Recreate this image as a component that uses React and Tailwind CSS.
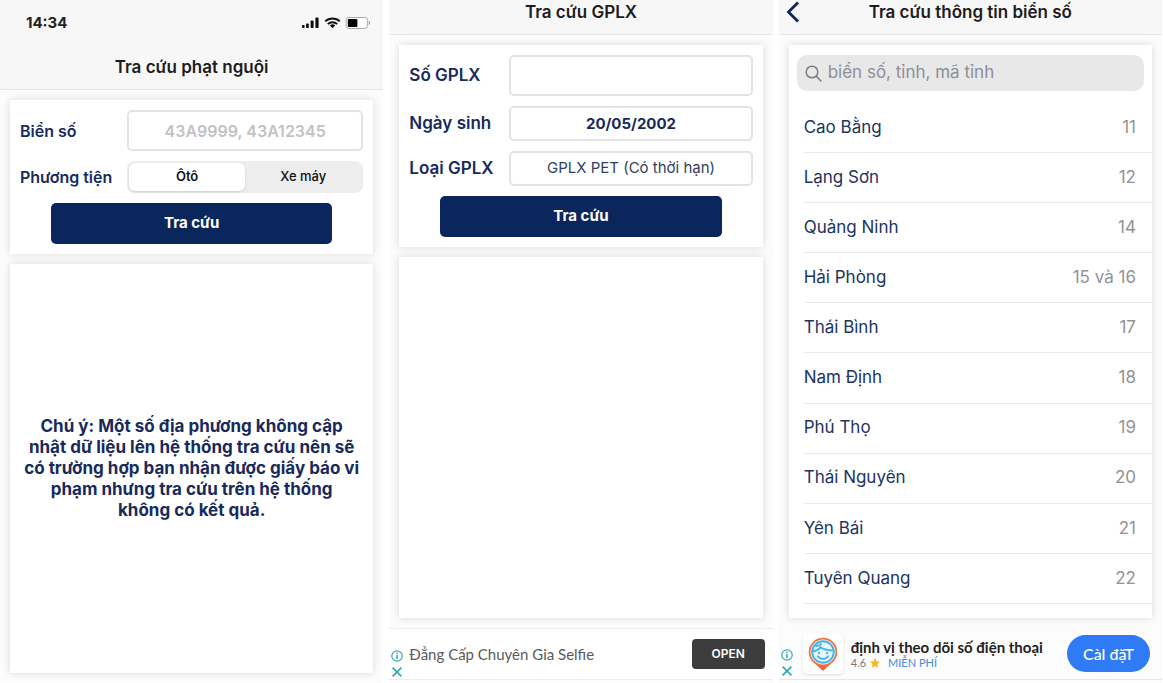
import { useState } from "react";

const provinces = [
  { name: "Cao Bằng", code: "11" },
  { name: "Lạng Sơn", code: "12" },
  { name: "Quảng Ninh", code: "14" },
  { name: "Hải Phòng", code: "15 và 16" },
  { name: "Thái Bình", code: "17" },
  { name: "Nam Định", code: "18" },
  { name: "Phú Thọ", code: "19" },
  { name: "Thái Nguyên", code: "20" },
  { name: "Yên Bái", code: "21" },
  { name: "Tuyên Quang", code: "22" },
];

const StatusIcons = () => (
  <svg width="70" height="14" viewBox="0 0 70 14" aria-hidden="true">
    <g fill="#111">
      <rect x="1" y="9" width="2.6" height="3" rx="0.8" />
      <rect x="5" y="7.4" width="2.8" height="4.6" rx="0.8" />
      <rect x="9.6" y="4.6" width="3" height="7.4" rx="0.8" />
      <rect x="14.4" y="1.6" width="3.2" height="10.4" rx="0.8" />
      <path d="M31.5 12.3 34.2 9.4a4 4 0 0 0-5.4 0z" />
    </g>
    <g fill="none" stroke="#111" strokeWidth="2">
      <path d="M24.2 5.4a10.4 10.4 0 0 1 14.6 0" />
      <path d="M26.8 8.1a6.6 6.6 0 0 1 9.4 0" />
    </g>
    <rect x="45.2" y="1.5" width="21.4" height="11" rx="2.8" fill="#fff" stroke="#aaa" />
    <rect x="46.8" y="3" width="9.6" height="8" rx="1" fill="#050505" />
    <path d="M67.8 5v4c1.7-.6 1.7-3.4 0-4z" fill="#999" />
  </svg>
);

const AdMarks = () => (
  <div className="flex w-3 shrink-0 flex-col gap-1 pt-[21px]">
    <svg width="12" height="12" viewBox="0 0 12 12" aria-hidden="true">
      <circle cx="6" cy="6" r="5.2" fill="none" stroke="#35a9b8" strokeWidth="1.2" />
      <circle cx="6" cy="3.3" r="0.9" fill="#35a9b8" />
      <path d="M6 5v4.2" stroke="#35a9b8" strokeWidth="1.5" />
    </svg>
    <svg width="12" height="12" viewBox="0 0 12 12" aria-hidden="true">
      <path d="M1.6 1.6 10.4 10.4M10.4 1.6 1.6 10.4" stroke="#2fa9a9" strokeWidth="1.6" />
    </svg>
  </div>
);

const AppIcon = () => (
  <svg width="30" height="34" viewBox="0 0 30 34" aria-hidden="true">
    <path d="M15 34 5.6 25.2h18.8z" fill="#ec6440" />
    <circle cx="15" cy="15" r="13.4" fill="#fff" stroke="#f0733f" strokeWidth="1.8" />
    <circle cx="15" cy="15" r="10.8" fill="#e8f7ff" stroke="#45b3e8" strokeWidth="2" />
    <path
      d="M5 14.2C8.6 13.8 11 12.6 12.4 10.2c3 2.2 7 3 12.2 3.2M7.4 9c2.4.2 4.6-.6 6.2-2.4"
      fill="none"
      stroke="#45b3e8"
      strokeWidth="2"
    />
    <g fill="#45b3e8">
      <circle cx="11" cy="16" r="1.2" />
      <circle cx="19" cy="16" r="1.2" />
    </g>
    <path d="M9.8 19.2c2.6 3.6 7.8 3.6 10.4 0" fill="none" stroke="#45b3e8" strokeWidth="1.8" strokeLinecap="round" />
  </svg>
);

const Card = ({ className = "", children }) => (
  <section className={`bg-white shadow-[0_0_8px_rgba(0,0,0,0.14)] ${className}`}>{children}</section>
);

const SubmitButton = () => (
  <button
    type="submit"
    className="mx-[31px] h-[41px] rounded-[5px] bg-[#0b265c] text-[15px] font-bold text-white"
  >
    Tra cứu
  </button>
);

const FineLookup = () => {
  const [vehicle, setVehicle] = useState("oto");

  return (
    <main className="flex flex-col bg-[#fcfcfc]">
      <header className="flex h-[90px] flex-col border-b border-[#e6e6e6] bg-[#f7f7f7]">
        <div className="flex items-center justify-between pt-3 pr-3 pl-[26px]">
          <span className="text-[15px] leading-[22px] font-bold text-[#222]">14:34</span>
          <StatusIcons />
        </div>
        <h1 className="mt-[22px] text-center text-[17px] leading-[22px] font-semibold text-[#1c1c1e]">
          Tra cứu phạt nguội
        </h1>
      </header>

      <div className="flex flex-1 flex-col gap-2.5 p-2.5">
        <Card>
          <form className="flex flex-col gap-2.5 p-2.5" onSubmit={(e) => e.preventDefault()}>
            <div className="flex items-center">
              <label htmlFor="plate" className="w-[107px] shrink-0 text-[16px] font-semibold">
                Biển số
              </label>
              <input
                id="plate"
                placeholder="43A9999, 43A12345"
                className="h-[41px] min-w-0 flex-1 rounded-[5px] border-2 border-[#e3e3e5] bg-white text-center text-[16px] font-semibold placeholder:text-[#c2c2c4]"
              />
            </div>
            <div className="flex items-center">
              <span id="vehicle" className="w-[107px] shrink-0 text-[16px] font-semibold">
                Phương tiện
              </span>
              <div
                role="group"
                aria-labelledby="vehicle"
                className="flex h-8 flex-1 rounded-lg bg-[#ededee] p-0.5 text-[13px] text-[#111]"
              >
                <button
                  type="button"
                  aria-pressed={vehicle === "oto"}
                  onClick={() => setVehicle("oto")}
                  className={`flex-1 rounded-md ${vehicle === "oto" ? "bg-white font-semibold shadow" : "font-medium"}`}
                >
                  Ôtô
                </button>
                <button
                  type="button"
                  aria-pressed={vehicle === "xemay"}
                  onClick={() => setVehicle("xemay")}
                  className={`flex-1 rounded-md ${vehicle === "xemay" ? "bg-white font-semibold shadow" : "font-medium"}`}
                >
                  Xe máy
                </button>
              </div>
            </div>
            <SubmitButton />
          </form>
        </Card>

        <Card className="flex flex-1 items-center justify-center px-2">
          <p className="text-center text-[17px] leading-[21px] font-bold">
            Chú ý: Một số địa phương không cập
            <br />
            nhật dữ liệu lên hệ thống tra cứu nên sẽ
            <br />
            có trường hợp bạn nhận được giấy báo vi
            <br />
            phạm nhưng tra cứu trên hệ thống
            <br />
            không có kết quả.
          </p>
        </Card>
      </div>
    </main>
  );
};

const LicenseLookup = () => {
  const [birthday, setBirthday] = useState("20/05/2002");

  return (
    <main className="flex flex-col bg-[#fcfcfc]">
      <header className="h-[35px] border-b border-[#e6e6e6] bg-[#f7f7f7]">
        <h1 className="pt-px text-center text-[17px] leading-[22px] font-semibold text-[#1c1c1e]">Tra cứu GPLX</h1>
      </header>

      <div className="flex flex-1 flex-col gap-2.5 p-2.5">
        <Card>
          <form className="flex flex-col gap-2.5 p-2.5" onSubmit={(e) => e.preventDefault()}>
            <div className="flex items-center">
              <label htmlFor="license" className="w-[100px] shrink-0 text-[17px] font-semibold">
                Số GPLX
              </label>
              <input
                id="license"
                className="h-[41px] min-w-0 flex-1 rounded-[5px] border-2 border-[#e3e3e5] bg-white text-center text-[16px]"
              />
            </div>
            <div className="flex items-center">
              <label htmlFor="birthday" className="w-[100px] shrink-0 text-[17px] font-semibold">
                Ngày sinh
              </label>
              <input
                id="birthday"
                value={birthday}
                onChange={(e) => setBirthday(e.target.value)}
                className="h-[35px] min-w-0 flex-1 rounded-[5px] border-2 border-[#e3e3e5] bg-white text-center text-[15px] font-bold"
              />
            </div>
            <div className="flex items-center">
              <label htmlFor="type" className="w-[100px] shrink-0 text-[17px] font-semibold">
                Loại GPLX
              </label>
              <select
                id="type"
                className="h-[35px] min-w-0 flex-1 appearance-none rounded-[5px] border-2 border-[#e3e3e5] bg-white text-center text-[15px] text-[#33405f] [text-align-last:center]"
              >
                <option>GPLX PET (Có thời hạn)</option>
              </select>
            </div>
            <SubmitButton />
          </form>
        </Card>

        <Card className="flex-1" />
      </div>

      <aside className="mb-[3px] flex h-[52px] border-y border-[#ececec] bg-white pr-2 pl-0.5">
        <AdMarks />
        <p className="flex-1 self-center pl-[6px] font-['Lato',sans-serif] text-[15px] text-[#5a5a5a]">
          Đẳng Cấp Chuyên Gia Selfie
        </p>
        <button type="button" className="h-[30px] w-[73px] self-center rounded bg-[#3c3c3c] text-[12px] font-semibold text-white">
          OPEN
        </button>
      </aside>
    </main>
  );
};

const PlateList = () => {
  const [query, setQuery] = useState("");

  const filtered = provinces.filter((item) =>
    `${item.name} ${item.code}`.toLowerCase().includes(query.toLowerCase())
  );

  return (
    <main className="flex flex-col bg-[#fcfcfc]">
      <header className="grid h-[35px] grid-cols-[32px_1fr_32px] border-b border-[#e6e6e6] bg-[#f7f7f7]">
        <button type="button" aria-label="Quay lại" className="flex h-6 items-center pl-[7px]">
          <svg width="14" height="22" viewBox="0 0 14 22" fill="none" stroke="#0b265c" strokeWidth="2.8">
            <path d="M12 1.5 2.5 11 12 20.5" />
          </svg>
        </button>
        <h1 className="pt-px text-center text-[17px] leading-[22px] font-semibold text-[#1c1c1e]">
          Tra cứu thông tin biển số
        </h1>
      </header>

      <div className="flex flex-1 flex-col p-2.5">
        <Card className="flex flex-1 flex-col pt-2.5">
          <label className="mx-2 flex h-9 items-center gap-1.5 rounded-[10px] bg-[#e8e8e9] px-2">
            <svg width="17" height="17" viewBox="0 0 17 17" fill="none" stroke="#7d7d82" strokeWidth="1.5" strokeLinecap="round">
              <circle cx="7" cy="7" r="5.8" />
              <path d="m11.4 11.4 4.6 4.6" />
            </svg>
            <input
              value={query}
              onChange={(e) => setQuery(e.target.value)}
              placeholder="biển số, tỉnh, mã tỉnh"
              aria-label="Tìm biển số"
              className="min-w-0 flex-1 text-[17px] outline-none placeholder:text-[#8e8e93]"
            />
          </label>
          <ul className="mt-3 mb-3.5 ml-[15px] flex flex-1 flex-col">
            {filtered.map((item) => (
              <li
                key={item.name}
                className="flex max-h-[52px] min-h-[50px] flex-1 items-center justify-between border-b border-[#e9e9eb] pr-4 text-[17px]"
              >
                <span className="text-[#21335f]">{item.name}</span>
                <span className="text-[#929296]">{item.code}</span>
              </li>
            ))}
          </ul>
        </Card>
      </div>

      <aside className="mb-[3px] flex h-[52px] border-b border-[#e6e6e6] pr-3 pl-0.5">
        <AdMarks />
        <div className="ml-2.5 flex size-10 shrink-0 items-center justify-center self-center rounded bg-white shadow">
          <AppIcon />
        </div>
        <div className="min-w-0 flex-1 self-center pl-2 font-['Lato',sans-serif]">
          <p className="text-[15px] leading-[18px] font-bold whitespace-nowrap text-[#222]">định vị theo dõi số điện thoại</p>
          <p className="flex items-center gap-1 text-[11px] leading-[14px] text-[#777]">
            4.6
            <svg width="10" height="10" viewBox="0 0 20 20" fill="#f5b920" aria-hidden="true">
              <path d="m10 0 3 6.6 7 .8-5.2 4.8 1.4 7.3L10 16l-6.2 3.5 1.4-7.3L0 7.4l7-.8z" />
            </svg>
            <span className="pl-1 text-[#3c8be0]">MIỄN PHÍ</span>
          </p>
        </div>
        <button
          type="button"
          className="h-[37px] w-[83px] shrink-0 self-center rounded-full bg-[#2f7bf6] font-['Lato',sans-serif] text-[16px] font-medium text-white"
        >
          Càl đặT
        </button>
      </aside>
    </main>
  );
};

const App = () => {
  return (
    <div className="grid min-h-screen grid-cols-3 gap-[6px] bg-white pr-px font-['Inter',sans-serif] text-[#182a5c]">
      <FineLookup />
      <LicenseLookup />
      <PlateList />
    </div>
  );
};

export default App;
